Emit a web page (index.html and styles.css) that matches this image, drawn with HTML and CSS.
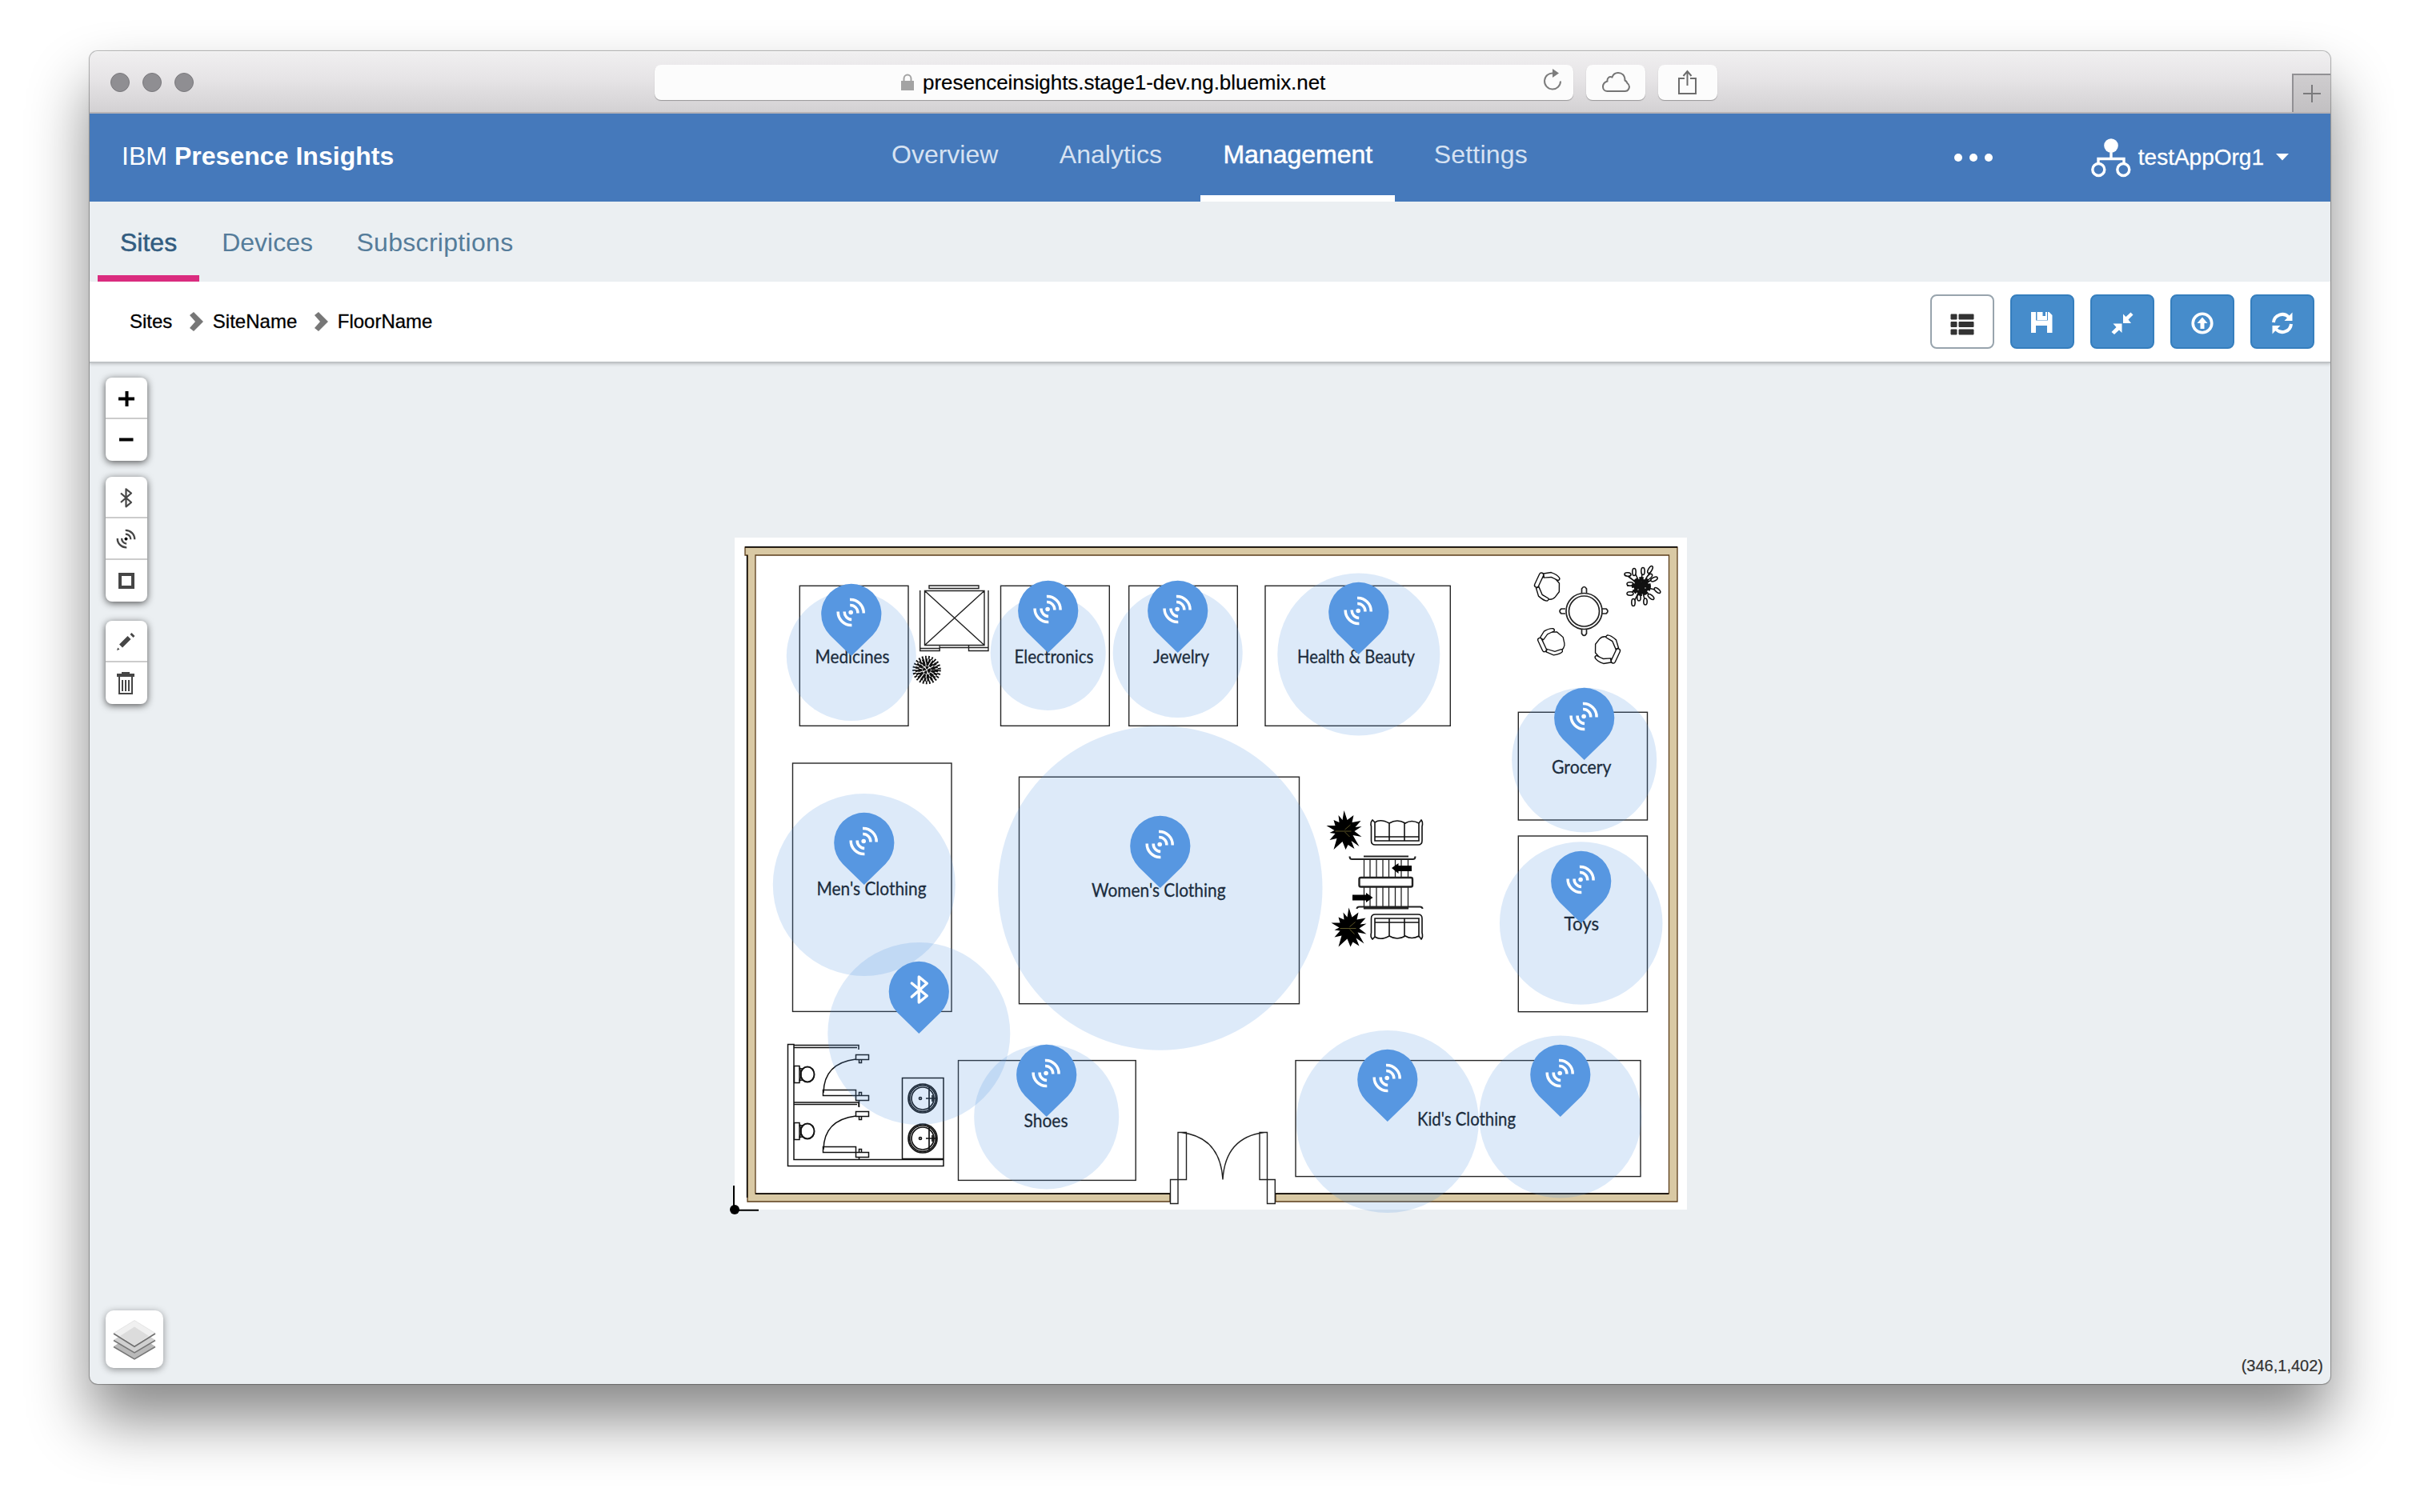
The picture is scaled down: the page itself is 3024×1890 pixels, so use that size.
FILE: index.html
```html
<!DOCTYPE html>
<html lang="en">
<head>
<meta charset="utf-8">
<title>IBM Presence Insights</title>
<link rel="stylesheet" href="styles.css">
</head>
<body>
<div class="window">
  <div class="titlebar">
    <div class="lights"><i></i><i></i><i></i></div>
    <div class="address">
      <svg class="lock" width="16" height="22" viewBox="0 0 16 22"><path d="M3.500 10V6.500a4.500 5 0 0 1 9 0V10" fill="none" stroke="#a3a3a3" stroke-width="2"/><path d="M0 9h16v12H0z" fill="#a3a3a3"/></svg>
      <span>presenceinsights.stage1-dev.ng.bluemix.net</span>
      <svg class="reload" width="24" height="28" viewBox="0 0 24 28"><path d="M13 5.500A10 10 0 1 0 22 15.500" fill="none" stroke="#7d7d7d" stroke-width="2"/><path d="M12 0l8 5.500-8 5.500z" fill="#7d7d7d"/></svg>
    </div>
    <div class="tool"><svg width="36" height="30" viewBox="0 0 36 30"><path d="M7.500 26H29a5.500 5.500 0 0 0 3.500-10 6 6 0 0 0-3-3.500C29.500 6 25.500 3 21 3c-4 0-6.500 2.500-7.500 5.500C10 7 7 9.500 7.500 13.500 4 14.500 2 17 2 20.500 2 24 4.500 26 7.500 26z" fill="none" stroke="#757575" stroke-width="2"/></svg></div>
    <div class="tool"><svg width="24" height="32" viewBox="0 0 24 32"><path d="M8 11H1v19h21V11h-7M11.500 20V2M6.500 8l5-6 5 6" fill="none" stroke="#6d6d6d" stroke-width="2"/></svg></div>
    <div class="newtab"><svg width="22" height="22" viewBox="0 0 22 22"><path d="M11 0v22M0 11h22" stroke="#7a7a7c" stroke-width="2"/></svg></div>
  </div>

  <header class="header">
    <div class="brand">IBM <b>Presence Insights</b></div>
    <nav class="nav"><a>Overview</a><a>Analytics</a><a class="on">Management</a><a>Settings</a></nav>
    <div class="account">
      <svg class="dots" width="50" height="12" viewBox="0 0 50 12"><g fill="#fff"><circle cx="6" cy="6" r="5"/><circle cx="25" cy="6" r="5"/><circle cx="44" cy="6" r="5"/></g></svg>
      <svg width="50" height="50" viewBox="0 0 50 50"><circle cx="25" cy="10" r="8.800" fill="#fff"/><g fill="none" stroke="#fff" stroke-width="3.400"><path d="M25 15v12M9 34v-7.500h32V34"/><circle cx="9.300" cy="40" r="7.500"/><circle cx="40.300" cy="40" r="7.500"/></g></svg>
      <span class="org">testAppOrg1</span>
      <svg width="16" height="10" viewBox="0 0 16 10"><path d="M0 0h16L8 8.500z" fill="#fff"/></svg>
    </div>
  </header>

  <nav class="subnav"><a class="on">Sites</a><a>Devices</a><a class="last">Subscriptions</a></nav>

  <div class="pathbar">
    <div class="crumbs">
      <span>Sites</span>
      <svg width="17" height="24" viewBox="0 0 17 24"><path d="M0 4l5-4 12 12L5 24l-5-4 7-8z" fill="#777"/></svg>
      <span>SiteName</span>
      <svg width="17" height="24" viewBox="0 0 17 24"><path d="M0 4l5-4 12 12L5 24l-5-4 7-8z" fill="#777"/></svg>
      <span>FloorName</span>
    </div>
    <div class="actions">
      <button class="btn plain"><svg viewBox="0 0 80 68"><path d="M26 25h7v6h-7zM36 25h18v6H36zM26 34.500h7v6h-7zM36 34.500h18v6H36zM26 44h7v6h-7zM36 44h18v6H36z" fill="#333" stroke="#333"/></svg></button>
      <button class="btn"><svg viewBox="0 0 80 68"><path fill-rule="evenodd" d="M26 22h6v10.500h15V22h1.500l4 4v22H46V39H32v9h-6zM33.500 22H46v10H33.500zM40.500 22v5h3.500v-5z" fill="#fff"/></svg></button>
      <button class="btn"><svg viewBox="0 0 80 68"><path d="M41 36V24.500l3.500 3.500 6-5.500 3 3-6 6 3.500 4.500zM39.500 36.500V48L36 44.500 30 50l-3.500-3 6-6-4-4.500z" fill="#fff"/></svg></button>
      <button class="btn"><svg viewBox="0 0 80 68"><circle cx="40" cy="36" r="11.800" fill="none" stroke="#fff" stroke-width="3.600"/><path d="M40 28.500l6.500 7.500H42.500v7h-5v-7h-4z" fill="#fff"/></svg></button>
      <button class="btn"><svg viewBox="0 0 80 68"><path d="M29 35a11 11 0 0 1 19-6.500M51 37a11 11 0 0 1-19 6.500" fill="none" stroke="#fff" stroke-width="4"/><path d="M52.500 22.500v10.500H42.500zM27.500 49.500V39h10z" fill="#fff"/></svg></button>
    </div>
  </div>

  <main class="map">
    <svg class="canvas" viewBox="112 452 2800 1278">
      <defs>
        <path id="pin" d="M0 0L-26.700-26.100A37.600 37.600 0 1 1 26.700-26.100Z" fill="#5797e1"/>
        <g id="wave"><circle r="2.800" fill="currentColor"/><path d="M-1-9A9.500 9.500 0 0 1 8.700 1M-1.200-16A16.500 16.500 0 0 1 16 1M1 9A9.500 9.500 0 0 1-8-1M1.200 16A16.500 16.500 0 0 1-16-1" fill="none" stroke="currentColor" stroke-width="3.500"/></g>
        <g id="beacon" color="#fff"><use href="#pin"/><use href="#wave" x="-.6" y="-54.500"/></g>
        <g id="palm"><path d="M-1-26L3-14 11-20 9-11 20-13 13-5 21-6 12 0 21 7 10 5 18 19 8 12 12 22 4 17 1 23-3 13-14 23-10 9-19 11-12 3-19 2-13-1-23-7-12-7-14-14-7-11-8-20-3-14z"/><path d="M-12 0H8M0-2l7-6M0 1l6 6" stroke="#5c5526" fill="none"/></g>
        <g id="sofa" fill="none" stroke="#111" stroke-width="1.600"><path d="M2 1q-3 3-1.500 8V27q0 5 5 5H59q5 0 5-5V9q1.500-5-1-8l-3 4q-9-5-17 0-10-6-20 0Q12-1 5 4zM5 4V27H60V4M23 4V27M42 4V27M5 22H60"/></g>
        <g id="basin" fill="none" stroke="#111" stroke-width="1.700"><circle r="18"/><circle r="16.300"/><circle r="14"/><path d="M8-14V14M4 0h14M12-4v8"/><circle cx="-3" r="1.500"/></g>
        <g id="chair" fill="#fff" stroke="#111" stroke-width="1.600"><path d="M-9-13q-6 8-5 14l5 11 11 5q12 0 14-8l2-9-5-11-9-4z"/><rect x="-18" y="-14" width="6" height="22" rx="3"/><path d="M-13-14l9-6q9-1 14 2 2 2 0 4l-11 0-9 5zM-14 9l8 9q10 3 14 1 2-3 0-4l-10-1-9-8z"/></g>
        <g id="stall" fill="none" stroke="#111" stroke-width="1.500"><path d="M1069.500 1318.500h16v6h-16zM1073.500 1324.500h3v4h-3zM1069.500 1369.500h16v6h-16zM1073.500 1365.500h3v4h-3zM1069.500 1324q-40 5-40.500 42M1028.500 1362.500h41v7h-41zM992.500 1332.500h6.500v21h-6.500z"/><ellipse cx="1009" cy="1343" rx="8.500" ry="9.500" stroke-width="2"/><path d="M999 1335q4 8 0 16M999 1335q4 2 5 0M999 1351q4-2 5 0"/></g>
      </defs>

      <rect x="918" y="672" width="1190" height="840" fill="#fff"/>

      <!-- outer walls -->
      <path d="M931 684H2096V1502H1594V1492H2085.500V694H944V1492H1462V1502H934V694H931z" fill="#d9c9a4" stroke="#5b3d1a" stroke-width="1.300"/>
      <path d="M931 683.700H2096M944 1492.300H1462M1594 1492.300H2085M933.600 694V1497" stroke="#000" stroke-width="1.500"/>

      <!-- departments -->
      <g fill="none" stroke="#262626" stroke-width="1.400">
        <rect x="999.300" y="732.300" width="135.700" height="175"/>
        <rect x="1250.500" y="732.300" width="135.800" height="175"/>
        <rect x="1410.700" y="732.300" width="135.600" height="175"/>
        <rect x="1581" y="732.300" width="231.300" height="175"/>
        <rect x="1897.300" y="890.300" width="161.200" height="134.700"/>
        <rect x="1897.300" y="1045" width="161.200" height="219.700"/>
        <rect x="990.500" y="954" width="198.500" height="310.400"/>
        <rect x="1273.500" y="971.200" width="350" height="283.500"/>
        <rect x="1197.500" y="1325.600" width="221.700" height="149.800"/>
        <rect x="1619" y="1325.600" width="431" height="145"/>
      </g>

      <!-- lift -->
      <g fill="none" stroke="#222" stroke-width="1.400"><path d="M1161 732h62v3.500h-62zM1155.500 738.500h74.500v68H1155.500zM1155.500 738.500l74.500 68M1230 738.500l-74.500 68M1149.700 738v75.500h24.500v-6M1149.700 810.500h24M1235 738v75.500h-24.500v-7h20M1174 809.500h61"/></g>

      <!-- plants -->
      <g fill="none" stroke="#111" transform="translate(1158 837.500)"><circle r="3" stroke-width="4" stroke-dasharray="3 1.200"/><circle r="8" stroke-width="5" stroke-dasharray="3.500 1.100"/><circle r="12" stroke-width="4.500" stroke-dasharray="2.600 1.300"/><circle r="15.800" stroke-width="4" stroke-dasharray="1.800 2.200"/></g>
      <g fill="#fff" stroke="#111" stroke-width="1.600" transform="translate(2051 733)">
        <path d="M0 0L-17-13M0 0L-9-19M0 0L1-20M0 0L13-21M0 0L17-11M0 0L21 5M0 0L13 14M0 0L5 20M0 0L-10 21M0 0L-15 9M0 0L-18-1"/>
        <g><ellipse cx="-17" cy="-15" rx="4" ry="2.200" transform="rotate(5 -17 -15)"/><ellipse cx="-9" cy="-18" rx="2.200" ry="4.500"/><ellipse cx="2" cy="-19" rx="2.200" ry="4.500"/><ellipse cx="11" cy="-21" rx="2.200" ry="5" transform="rotate(30 11 -21)"/><ellipse cx="10" cy="-12" rx="4.500" ry="2.200" transform="rotate(-45 10 -12)"/><ellipse cx="16" cy="-9" rx="4.500" ry="2.200" transform="rotate(-25 16 -9)"/><ellipse cx="20" cy="5" rx="4.500" ry="2.200" transform="rotate(40 20 5)"/><ellipse cx="12" cy="13" rx="4.500" ry="2.200" transform="rotate(40 12 13)"/><ellipse cx="5" cy="19" rx="2.200" ry="4"/><ellipse cx="-3" cy="14" rx="2.200" ry="4"/><ellipse cx="-10" cy="20" rx="2.200" ry="4.500"/><ellipse cx="-14" cy="9" rx="4" ry="2.200"/><ellipse cx="-14" cy="-3" rx="4" ry="2.200"/></g>
        <circle r="9.500" fill="#111" stroke-width="5" stroke-dasharray="5 2"/><circle cx="-4" cy="4" r="1.500"/><circle cx="5" cy="2" r="1.500"/><circle cx="0" cy="-6" r="1"/>
      </g>
      <use href="#palm" x="1680.500" y="1039"/>
      <use href="#palm" x="1686.500" y="1160.500"/>

      <!-- lounge and escalator -->
      <use href="#sofa" x="1713" y="1024"/>
      <use href="#sofa" transform="translate(1713 1175) scale(1 -1)"/>
      <g fill="none" stroke="#222" stroke-width="1.300"><path d="M1704.500 1074v23M1712 1074v23M1720 1074v23M1728 1074v23M1735.500 1074v23M1743.500 1074v23M1751 1074v23M1759.500 1074v23M1704.500 1109v27M1712 1109v27M1720 1109v27M1728 1109v27M1735.500 1109v27M1743.500 1109v27M1751 1109v27M1759.500 1109v27"/><path d="M1686.500 1070.500q0 3.500 3 3.500h76q3 0 3-3.500M1704 1070.500h56M1695.500 1136q0-2.500 3-2.500h76q3 0 3 2.500M1704 1135.500h56" stroke-width="2"/><rect x="1698.500" y="1097" width="66.500" height="11.500" rx="2" stroke-width="2.400" fill="#fff"/><path d="M1739 1085l8.500-6v3h16.500v7h-16.500v3zM1715.500 1122l-8.500-6v2.500h-17v7h17v2.500z" fill="#000" stroke="none"/></g>

      <!-- cafe corner -->
      <use href="#chair" transform="translate(1934 733)rotate(25)scale(.88)"/>
      <use href="#chair" transform="translate(1939.500 803)rotate(-25)scale(.84)"/>
      <use href="#chair" transform="translate(2008 812)rotate(205)scale(.88)"/>
      <g fill="none" stroke="#222" stroke-width="1.700"><circle cx="1979.500" cy="764" r="22.500"/><circle cx="1979.500" cy="764" r="19"/><path d="M1976.500 741v-5q3-5 6 0v5M1976.500 787v5q3 5 6 0v-5M1956 761h-5q-4 3 0 6h5M2002 761h5q4 3 0 6h-5"/></g>

      <!-- washroom -->
      <use href="#stall"/><use href="#stall" y="71"/>
      <g fill="none" stroke="#111" stroke-width="1.500"><path d="M984.500 1305.500h7.500V1449.500h187V1457.500H984.500zM992 1306.500h81v5.500M992 1309.500h79M992 1378h81v5.500M992 1380.500h79M1073.500 1376v8M1073.500 1446v4M1127.500 1347.500h51.500v101h-51.500z"/></g>
      <use href="#basin" x="1153" y="1373"/><use href="#basin" x="1153" y="1423"/>

      <!-- entrance -->
      <g fill="none" stroke="#222" stroke-width="1.400"><path d="M1472 1415.500h10.500V1474.500H1472zM1462.500 1474.500h9.500v30h-9.500zM1574 1415.500h9.500V1474.500H1574zM1583.500 1474.500h9.800v30h-9.800zM1476 1415.500q49 6 52 59M1580 1415.500q-49 6-52 59"/></g>

      <g class="label">
        <text x="1018.500" y="829" textLength="93" lengthAdjust="spacingAndGlyphs">Medicines</text>
        <text x="1267.500" y="829" textLength="99" lengthAdjust="spacingAndGlyphs">Electronics</text>
        <text x="1441" y="829" textLength="70" lengthAdjust="spacingAndGlyphs">Jewelry</text>
        <text x="1621" y="829" textLength="147" lengthAdjust="spacingAndGlyphs">Health &amp; Beauty</text>
        <text x="1939" y="967" textLength="74.500" lengthAdjust="spacingAndGlyphs">Grocery</text>
        <text x="1954.500" y="1163" textLength="43.500" lengthAdjust="spacingAndGlyphs">Toys</text>
        <text x="1020.500" y="1118.500" textLength="137" lengthAdjust="spacingAndGlyphs">Men's Clothing</text>
        <text x="1364" y="1121" textLength="167.500" lengthAdjust="spacingAndGlyphs">Women's Clothing</text>
        <text x="1279.500" y="1409" textLength="55" lengthAdjust="spacingAndGlyphs">Shoes</text>
        <text x="1771" y="1407" textLength="123" lengthAdjust="spacingAndGlyphs">Kid's Clothing</text>
      </g>

      <!-- signal ranges -->
      <g fill="#5596e1" fill-opacity=".2">
        <circle cx="1063.800" cy="820" r="81"/><circle cx="1309.700" cy="816" r="72"/><circle cx="1471.700" cy="816" r="81"/><circle cx="1697.800" cy="818" r="101.500"/>
        <circle cx="1979.700" cy="950" r="90.500"/><circle cx="1975.700" cy="1154" r="101.800"/><circle cx="1079.800" cy="1106" r="114"/><circle cx="1449.800" cy="1110" r="202.700"/>
        <circle cx="1148.300" cy="1292" r="114"/><circle cx="1307.700" cy="1396" r="90.500"/><circle cx="1733.800" cy="1402" r="114"/><circle cx="1949.800" cy="1396" r="101.500"/>
      </g>
      <use href="#beacon" x="1063.800" y="820"/><use href="#beacon" x="1309.700" y="816"/><use href="#beacon" x="1471.700" y="816"/><use href="#beacon" x="1697.800" y="818"/>
      <use href="#beacon" x="1979.700" y="950"/><use href="#beacon" x="1975.700" y="1154"/><use href="#beacon" x="1079.800" y="1106"/><use href="#beacon" x="1449.800" y="1110"/>
      <use href="#beacon" x="1307.700" y="1396"/><use href="#beacon" x="1733.800" y="1402"/><use href="#beacon" x="1949.800" y="1396"/>
      <g transform="translate(1148.300 1292)"><use href="#pin"/><path d="M-9-46L10-62.800 0-71V-39L10-47.200-9-63" fill="none" stroke="#fff" stroke-width="3.400" stroke-linecap="round" stroke-linejoin="round"/></g>

      <path d="M917 1482v30M918 1512.700h30" stroke="#000" stroke-width="2"/><circle cx="918" cy="1512" r="6"/>
    </svg>

    <div class="controls">
      <div class="group">
        <a><svg viewBox="0 0 52 52"><path d="M16 26.500h20M26.500 17v19" stroke="#000" stroke-width="4"/></svg></a>
        <a><svg viewBox="0 0 52 52"><path d="M17 25.500h17.500" stroke="#000" stroke-width="4"/></svg></a>
      </div>
      <div class="group">
        <a><svg viewBox="0 0 52 52"><path d="M19 32l13-11.500-6.500-5.200v22L32 32 19 20.500" fill="none" stroke="#464646" stroke-width="2.200" stroke-linejoin="round"/></svg></a>
        <a><svg class="wave-icon" viewBox="0 0 52 52"><use href="#wave" transform="translate(25.500 25.600)scale(.67)"/><circle cx="25.500" cy="25.600" r="1.900"/></svg></a>
        <a><svg viewBox="0 0 52 52"><path d="M18 18h16v16H18z" fill="none" stroke="#464646" stroke-width="4"/></svg></a>
      </div>
      <div class="group">
        <a><svg viewBox="0 0 52 52"><path d="M14 37l1.200-3.500 2.300 2.300zM17 29.500L27.500 19l4 4L21 33.500zM30.500 17l2-2 4 4-2 2z" fill="#464646"/></svg></a>
        <a><svg viewBox="0 0 52 52"><path d="M14 14h6v-2h10v2h6v4H14z" fill="#464646"/><path d="M17 18v21h16V18M21 22v14M25 22v14M29 22v14" fill="none" stroke="#464646" stroke-width="2"/></svg></a>
      </div>
    </div>
    <div class="layers">
      <svg viewBox="0 0 72 72">
        <path d="M10 45l26-17 26 17-26 16z" fill="#b9b9b9"/><path d="M10 45.500L36 61l26-15.500" fill="none" stroke="#777" stroke-width="1.500"/>
        <path d="M10 37l26-17 26 17-26 16z" fill="#d0d0d0"/><path d="M10 37.500L36 53l26-15.500" fill="none" stroke="#777" stroke-width="1.500"/>
        <path d="M10 28.500L36 12.500l26 16L36 44.500z" fill="#f0f0f0" stroke="#ddd" stroke-width=".7"/><path d="M18 32L36 20.500 54 32 36 44z" fill="#dcdcdc"/><path d="M10 29L36 45.200 62 29" fill="none" stroke="#707070" stroke-width="1.700"/>
      </svg>
    </div>
    <div class="coords">(346,1,402)</div>
  </main>
</div>
</body>
</html>
```
FILE: styles.css
```css
* { box-sizing: border-box; }
body {
  margin: 0;
  width: 3024px;
  height: 1890px;
  padding: 64px 112px 160px;
  overflow: hidden;
  background: #fff;
  font-family: "Liberation Sans", Arial, sans-serif;
}
svg { display: block; flex: none; }
.window {
  display: flex;
  flex-direction: column;
  width: 2800px;
  height: 1666px;
  border-radius: 10px;
  overflow: hidden;
  background: #ebeff2;
  box-shadow: 0 0 1px 1px rgba(0, 0, 0, .3), 0 44px 76px rgba(0, 0, 0, .47);
}

/* browser chrome */
.titlebar {
  display: flex;
  align-items: center;
  flex: none;
  height: 78px;
  padding-left: 26px;
  background: linear-gradient(#f0eff0, #e6e4e6 45%, #d3d1d3);
  border-top: 1px solid #fafafa;
  border-bottom: 2px solid #b6b3b6;
}
.lights { display: flex; gap: 16px; width: 680px; }
.lights i { width: 24px; height: 24px; border-radius: 50%; background: #8f8e92; border: 1px solid #7a797d; }
.address {
  display: flex;
  align-items: center;
  width: 1148px;
  height: 44px;
  margin-right: 16px;
  padding-left: 308px;
  border-radius: 8px;
  background: #fcfcfc;
  box-shadow: 0 1px 1px rgba(0, 0, 0, .3);
  font-size: 26px;
  letter-spacing: -.05px;
  -webkit-text-stroke: .2px #000;
}
.address span { margin: 1px auto 0 11px; white-space: nowrap; }
.reload { margin: -5px 14px 0 0; }
.tool {
  display: flex;
  align-items: center;
  justify-content: center;
  width: 74px;
  height: 44px;
  margin-right: 16px;
  border-radius: 8px;
  background: #fcfcfc;
  box-shadow: 0 1px 1px rgba(0, 0, 0, .3);
}
.newtab {
  display: flex;
  align-items: center;
  justify-content: center;
  align-self: flex-end;
  width: 48px;
  height: 48px;
  margin-left: auto;
  background: linear-gradient(#cfcdcf, #c2c0c2);
  border: solid #919094;
  border-width: 2px 0 0 2px;
}

/* application header */
.header {
  display: grid;
  grid-template-columns: 974px auto 1fr;
  flex: none;
  height: 110px;
  background: #4579bb;
  color: #fff;
  font-size: 32px;
}
.brand { padding-left: 40px; line-height: 106px; letter-spacing: .03px; }
.nav { display: flex; gap: 20.5px; }
.nav a { height: 110px; padding: 0 28px; line-height: 102px; color: #d6e2f2; }
.nav a:last-child { letter-spacing: .2px; }
.nav .on { color: #fff; border-bottom: 8px solid #fff; -webkit-text-stroke: .5px #fff; }
.account { display: flex; align-items: center; justify-content: flex-end; padding-right: 52px; font-size: 28px; -webkit-text-stroke: .3px #fff; }
.dots { margin-right: 122px; }
.org { margin: 0 15px 0 9px; }

.subnav { display: flex; flex: none; height: 100px; padding-left: 10px; font-size: 32px; color: #557c9a; }
.subnav a { height: 100px; padding: 10px 28px 0; line-height: 83px; }
.subnav .last { margin-left: -1.5px; letter-spacing: .3px; }
.subnav .on { color: #325c80; border-bottom: 8px solid #da2c7f; -webkit-text-stroke: .5px #325c80; }

.pathbar {
  position: relative;
  display: flex;
  align-items: center;
  justify-content: space-between;
  flex: none;
  height: 100px;
  padding: 0 20px 0 50px;
  background: #fff;
  box-shadow: 0 2px 0 #bfc3c6, 0 3px 4px rgba(0, 0, 0, .2);
  z-index: 1;
}
.crumbs { display: flex; align-items: center; font-size: 24px; -webkit-text-stroke: .3px #000; }
.crumbs svg { margin: 0 12px 0 21.5px; }
.actions { display: flex; gap: 20px; }
.btn { width: 80px; height: 68px; padding: 0; border: 2px solid #357ebd; border-radius: 8px; background: #468ccb; }
.btn svg { width: 80px; height: 68px; margin: -2px; }
.plain { background: #fff; border-color: #98a4ad; }

/* floor map */
.map { position: relative; flex: 1; padding: 20px; }
.canvas { position: absolute; inset: 0; width: 2800px; height: 1278px; }
.label { font: 23px Lato, Carlito, sans-serif; fill: #0f1113; stroke: #0f1113; stroke-width: .3px; }
.controls { position: relative; display: flex; flex-direction: column; gap: 20px; width: 52px; }
.group { display: flex; flex-direction: column; border-radius: 8px; background: #fff; box-shadow: 0 2px 10px rgba(0, 0, 0, .65); }
.group:last-child { margin-top: 4px; }
.group a { height: 52px; border-bottom: 2px solid #ccc; }
.group a:last-child { border: 0; }
.group svg { width: 52px; height: 52px; }
.wave-icon { color: #464646; }
.layers { position: absolute; left: 20px; bottom: 20px; width: 72px; height: 72px; border-radius: 10px; background: #fff; box-shadow: 0 2px 10px rgba(0, 0, 0, .4); }
.coords { position: absolute; right: 9px; bottom: 13px; font-size: 20px; line-height: 20px; color: #333; -webkit-text-stroke: .2px #333; }
```
